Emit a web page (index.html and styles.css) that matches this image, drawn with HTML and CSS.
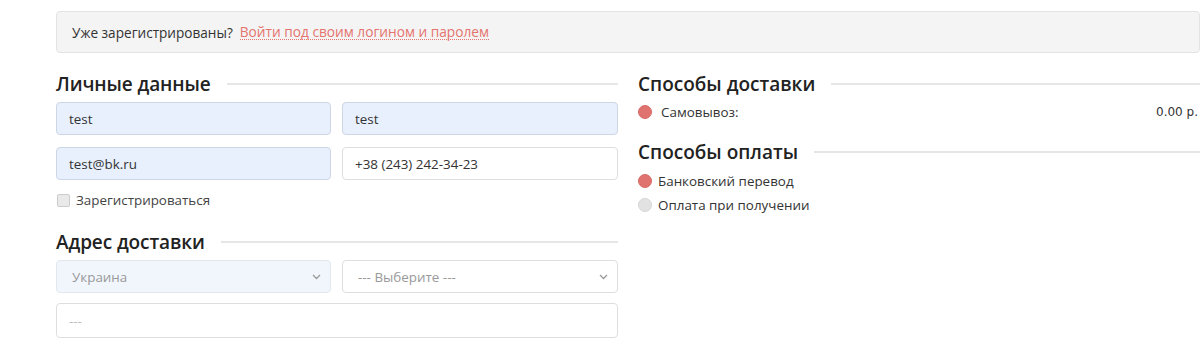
FILE: index.html
```html
<!DOCTYPE html>
<html lang="ru">
<head>
<meta charset="utf-8">
<link rel="stylesheet" href="styles.css">
</head>
<body>
<div class="page">
  <div class="login-bar">
    <span>Уже зарегистрированы?</span>
    <a class="login-link" href="#">Войти под своим логином и паролем</a>
  </div>
  <div class="cols">
    <div class="col">
      <h2 class="heading"><span>Личные данные</span></h2>
      <div class="grid">
        <div class="field filled">test</div>
        <div class="field filled">test</div>
        <div class="field filled">test@bk.ru</div>
        <div class="field">+38 (243) 242-34-23</div>
      </div>
      <label class="check"><span class="box"></span>Зарегистрироваться</label>
      <h2 class="heading addr"><span>Адрес доставки</span></h2>
      <div class="grid">
        <div class="field select tinted muted">Украина<svg class="chev" width="9" height="6" viewBox="0 0 9 6"><path d="M1 1l3.5 3.5L8 1" fill="none" stroke="#999" stroke-width="1.3"/></svg></div>
        <div class="field select muted">--- Выберите ---<svg class="chev" width="9" height="6" viewBox="0 0 9 6"><path d="M1 1l3.5 3.5L8 1" fill="none" stroke="#999" stroke-width="1.3"/></svg></div>
        <div class="field wide placeholder">---</div>
      </div>
    </div>
    <div class="col right">
      <h2 class="heading"><span>Способы доставки</span></h2>
      <div class="ship-row">
        <span class="radio on"></span>
        <span class="ship-name">Самовывоз:</span>
        <span class="price">0.00 р.</span>
      </div>
      <h2 class="heading pay"><span>Способы оплаты</span></h2>
      <div class="pay-row"><span class="radio on"></span>Банковский перевод</div>
      <div class="pay-row"><span class="radio"></span>Оплата при получении</div>
    </div>
  </div>
</div>
</body>
</html>
```
FILE: styles.css
```css
html, body {
  margin: 0;
  padding: 0;
  background: #fff;
  overflow: hidden;
}
body {
  font-family: "Open Sans", "Noto Sans", sans-serif;
  font-size: 13.4px;
  color: #333;
}
.page {
  width: 1144px;
  margin-left: 56px;
  padding-top: 11px;
}
.login-bar {
  box-sizing: border-box;
  height: 42px;
  background: #f4f4f4;
  border: 1px solid #e3e3e3;
  border-radius: 4px;
  display: flex;
  align-items: center;
  padding-left: 15px;
  gap: 7px;
  font-size: 13.6px;
  color: #333;
}
.login-link {
  color: #e5736e;
  text-decoration: none;
  border-bottom: 1px dotted #e5736e;
  line-height: 15px;
  font-size: 13.7px;
}
.cols {
  display: flex;
  gap: 20px;
  margin-top: 20px;
}
.col {
  width: 562px;
}
.heading {
  margin: 0;
  display: flex;
  align-items: center;
  gap: 16px;
  font-size: 19px;
  font-weight: 600;
  line-height: 22px;
  height: 22px;
  color: #222;
  letter-spacing: -0.1px;
}
.col.right .heading {
  letter-spacing: 0;
}
.heading::after {
  content: "";
  flex: 1;
  height: 2px;
  background: #e6e6e6;
}
.grid {
  display: grid;
  grid-template-columns: 275px 276px;
  column-gap: 11px;
  row-gap: 12px;
  margin-top: 7px;
}
.field {
  box-sizing: border-box;
  height: 33px;
  border: 1px solid #dedede;
  border-radius: 4px;
  background: #fff;
  display: flex;
  align-items: center;
  padding-left: 12px;
  padding-right: 9px;
  color: #333;
}
.field.filled {
  background: #e8f0fe;
  border-color: #cdd6e4;
}
.field.tinted {
  background: #f1f6fd;
  border-color: #e4e8ee;
}
.field.muted {
  color: #999;
  justify-content: space-between;
  padding-left: 15px;
}
.field.wide {
  grid-column: 1 / -1;
  margin-top: -2px;
  height: 35px;
}
.field.placeholder {
  color: #bbb;
}
.check {
  display: flex;
  align-items: center;
  gap: 6px;
  margin-top: 11px;
  margin-left: 1px;
  color: #444;
}
.box {
  box-sizing: border-box;
  width: 13px;
  height: 13px;
  border: 1px solid #ccc;
  border-radius: 2px;
  background: #e9e9e9;
}
.heading.addr {
  margin-top: 22px;
}
.ship-row {
  display: flex;
  align-items: center;
  margin-top: 8px;
  height: 18px;
}
.ship-name {
  margin-left: 9px;
}
.price {
  margin-left: auto;
  padding-right: 2px;
  font-family: "DejaVu Sans", sans-serif;
  font-size: 12px;
  color: #333;
}
.radio {
  box-sizing: border-box;
  width: 14px;
  height: 14px;
  border-radius: 50%;
  background: #e2e2e2;
  border: 1px solid #d6d6d6;
  flex: none;
}
.radio.on {
  background: #e07370;
  border-color: #d86a66;
}
.heading.pay {
  margin-top: 20px;
}
.pay-row {
  display: flex;
  align-items: center;
  gap: 6px;
  height: 18px;
  margin-top: 9px;
  color: #333;
}
.pay-row + .pay-row {
  margin-top: 6px;
}
```
